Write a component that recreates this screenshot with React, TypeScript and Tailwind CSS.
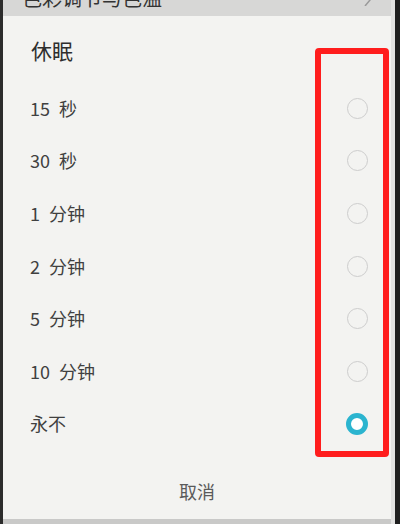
const options = [
  { num: "15", unit: "秒", selected: false },
  { num: "30", unit: "秒", selected: false },
  { num: "1", unit: "分钟", selected: false },
  { num: "2", unit: "分钟", selected: false },
  { num: "5", unit: "分钟", selected: false },
  { num: "10", unit: "分钟", selected: false },
  { num: "", unit: "永不", selected: true },
];

function Radio({ selected }: { selected: boolean }) {
  if (selected) {
    return <div className="w-[22px] h-[22px] rounded-full border-[5px] border-[#2bb4cf] bg-white" />;
  }
  return <div className="w-[21px] h-[21px] rounded-full border-[1.5px] border-[#cdcdcd]" />;
}

export default function App() {
  return (
    <div
      className="relative flex w-[400px] h-[524px] overflow-hidden bg-[#f3f3f1]"
      style={{ fontFamily: '"Noto Sans CJK SC", "Noto Sans", sans-serif' }}
    >
      {/* left edge */}
      <div className="w-[3px] bg-[#2c2c2c] shrink-0" />

      <div className="flex flex-col flex-1 min-w-0">
        {/* top bar, cut off */}
        <div className="relative h-[16px] bg-[#d7d7d6] overflow-hidden shrink-0">
          <div className="mt-[-12px] ml-[19px] text-[20px] leading-[20px] text-[#333]">色彩调节与色温</div>
          <svg className="absolute right-[18px] top-[-6px]" width="10" height="12" viewBox="0 0 10 12">
            <path d="M2 0 L7 6 L2 12" fill="none" stroke="#9a9a9a" strokeWidth="1.5" />
          </svg>
        </div>

        {/* dialog */}
        <div className="flex flex-col flex-1 bg-[#f3f3f1]">
          <div className="h-[66px] flex items-center pl-[28px] pt-[4px] text-[21px] text-[#2e2e2e]">休眠</div>

          {options.map((o) => (
            <div key={o.unit + o.num} className="h-[52.6px] flex items-center justify-between pl-[27px] pr-[23px]">
              <span className="flex items-center text-[18px] text-[#404040]">
                {o.num && <span className="mr-[9px]">{o.num}</span>}
                <span>{o.unit}</span>
              </span>
              <Radio selected={o.selected} />
            </div>
          ))}

          <div className="h-[69px] flex items-center justify-center pt-[14px] text-[18px] text-[#5a5a5a]">
            取消
          </div>
        </div>
        <div className="h-[5px] bg-[#c9c9c8] shrink-0" />
      </div>

      {/* right edge */}
      <div className="w-[4px] bg-[#e2e2e1] shrink-0" />
      <div className="w-[5px] bg-[#1f1f1f] shrink-0" />

      {/* red highlight box */}
      <div className="absolute left-[315px] top-[48px] w-[74px] h-[409px] border-[6px] border-[#ff1d1d] rounded-[4px]" />
    </div>
  );
}
